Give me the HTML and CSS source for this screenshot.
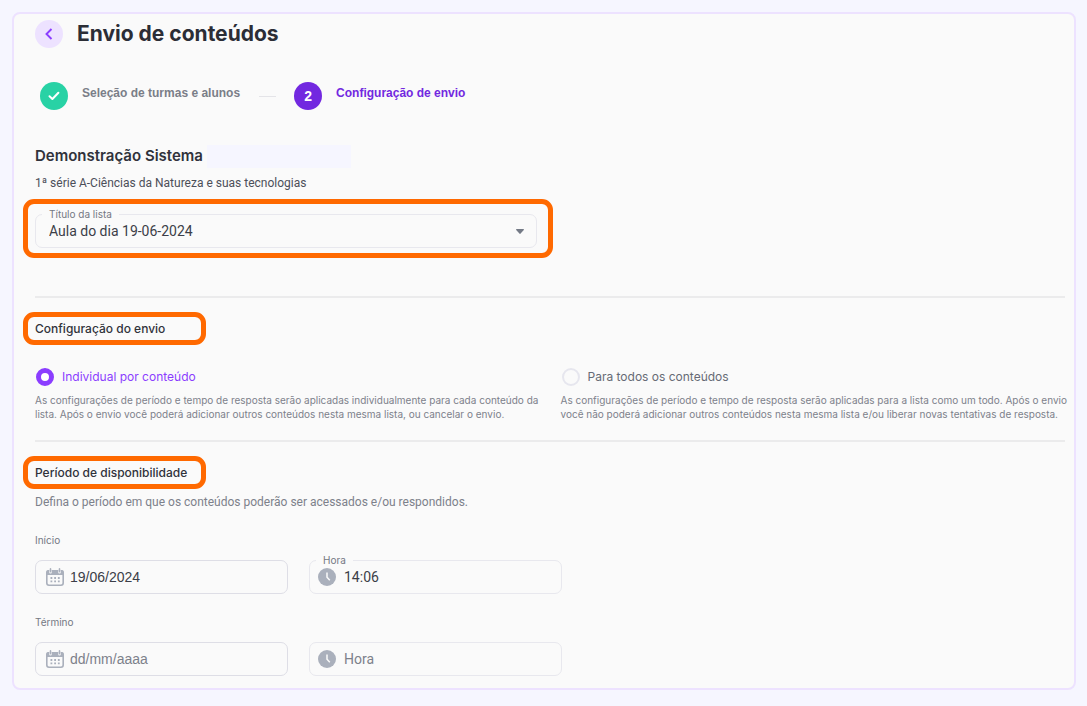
FILE: index.html
```
<!DOCTYPE html>
<html lang="pt-BR">

<head>
    <meta charset="UTF-8">
    <meta name="viewport" content="width=device-width, initial-scale=1.0">
    <title>Envio de conteúdos</title>
    <link rel="stylesheet" href="styles.css">
</head>

<body>
    <main class="card">
        <header class="header">
            <button type="button" class="back" aria-label="Voltar">
                <svg width="8" height="12" viewBox="0 0 8 12"><path d="M6.5 1 1.5 6l5 5" fill="none" stroke="#8b3dff" stroke-width="1.9" /></svg>
            </button>
            <h1>Envio de conteúdos</h1>
        </header>

        <ol class="steps">
            <li class="step done">
                <span class="circle">
                    <svg width="12" height="10" viewBox="0 0 12 10"><path d="M1.5 5.3 4.4 8l6-6.3" fill="none" stroke="#fff" stroke-width="2" stroke-linecap="round" stroke-linejoin="round" /></svg>
                </span>
                <span class="step-label">Seleção de turmas e alunos</span>
            </li>
            <li class="step current">
                <span class="circle">2</span>
                <span class="step-label">Configuração de envio</span>
            </li>
        </ol>

        <div class="school">
            <h2>Demonstração Sistema</h2>
            <span class="school-name"></span>
        </div>
        <p class="class-name">1ª série A-Ciências da Natureza e suas tecnologias</p>

        <div class="mark mark-field">
            <div class="field">
                <label class="float" for="lista">Título da lista</label>
                <select id="lista">
                    <option>Aula do dia 19-06-2024</option>
                </select>
                <svg class="arrow" width="8" height="5" viewBox="0 0 8 5"><path d="M.6 0h6.8q.8.2.4.9L4.6 4.6q-.6.6-1.2 0L.2.9Q-.2.2.6 0z" fill="#747a86" /></svg>
            </div>
        </div>

        <section class="config">
            <h3 class="mark">Configuração do envio</h3>
            <div class="options">
                <div class="option">
                    <label><input type="radio" name="envio" checked aria-describedby="desc1"> Individual por conteúdo</label>
                    <p id="desc1">As configurações de período e tempo de resposta serão aplicadas individualmente para cada conteúdo da lista. Após o envio você poderá adicionar outros conteúdos nesta mesma lista, ou cancelar o envio.</p>
                </div>
                <div class="option">
                    <label><input type="radio" name="envio" aria-describedby="desc2"> Para todos os conteúdos</label>
                    <p id="desc2">As configurações de período e tempo de resposta serão aplicadas para a lista como um todo. Após o envio você não poderá adicionar outros conteúdos nesta mesma lista e/ou liberar novas tentativas de resposta.</p>
                </div>
            </div>
        </section>

        <section class="period">
            <h3 class="mark">Período de disponibilidade</h3>
            <p class="period-text">Defina o período em que os conteúdos poderão ser acessados e/ou respondidos.</p>

            <label class="row-label" for="inicio">Início</label>
            <div class="row">
                <div class="field date">
                    <svg class="icon" width="18" height="18" viewBox="0 0 18 18"><use href="#calendar" /></svg>
                    <input type="text" id="inicio" value="19/06/2024">
                </div>
                <div class="field time">
                    <label class="float" for="hora1">Hora</label>
                    <svg class="icon" width="18" height="18" viewBox="0 0 18 18"><use href="#clock" /></svg>
                    <input type="text" id="hora1" value="14:06">
                </div>
            </div>

            <label class="row-label" for="termino">Término</label>
            <div class="row">
                <div class="field date">
                    <svg class="icon" width="18" height="18" viewBox="0 0 18 18"><use href="#calendar" /></svg>
                    <input type="text" id="termino" placeholder="dd/mm/aaaa">
                </div>
                <div class="field time">
                    <svg class="icon" width="18" height="18" viewBox="0 0 18 18"><use href="#clock" /></svg>
                    <input type="text" aria-label="Hora de término" placeholder="Hora">
                </div>
            </div>
        </section>
    </main>

    <svg class="symbols" width="0" height="0">
        <symbol id="calendar" viewBox="0 0 18 18">
            <rect x=".8" y="2.8" width="16.4" height="14.4" rx="2.2" fill="none" stroke="#aab0bc" stroke-width="1.6" />
            <path d="M.2 7V4.3q0-2.3 2.3-2.3h13q2.3 0 2.3 2.3V7z" fill="#aab0bc" />
            <path d="M4.5 3v1.2M13.5 3v1.2" stroke="#fafafa" stroke-width="2.6" stroke-linecap="round" />
            <path d="M4.5.9v2.9M13.5.9v2.9" stroke="#aab0bc" stroke-width="1.6" stroke-linecap="round" />
            <path d="M4.5 10h9.6M4.5 13.4h9.6" stroke="#aab0bc" stroke-width="1.8" stroke-dasharray="1.8 1.9" />
        </symbol>
        <symbol id="clock" viewBox="0 0 18 18">
            <circle cx="9" cy="9" r="9" fill="#aab0bc" />
            <path d="M9 4.5v4.8l2.8 2.9" fill="none" stroke="#fafafa" stroke-width="1.5" />
        </symbol>
    </svg>
</body>

</html>
```
FILE: styles.css
```
* {
    box-sizing: border-box;
}

body {
    margin: 0;
    padding: 12px 11px 16px 12px;
    background: #f6f6ff;
    color: #30323b;
    font-family: Inter, "Liberation Sans", sans-serif;
}

h1,
h2,
h3,
p,
ol {
    margin: 0;
    padding: 0;
}

input,
select {
    font-family: inherit;
}

.card {
    padding: 6px 9px 12px 21px;
    border: 2px solid #ede2ff;
    border-radius: 8px;
    background: #fafafa;
}

.header {
    display: flex;
    align-items: center;
    gap: 14px;
}

.back {
    display: flex;
    align-items: center;
    justify-content: center;
    width: 28px;
    height: 28px;
    padding: 0;
    border: 0;
    border-radius: 50%;
    background: #ede2ff;
}

h1 {
    font-size: 21px;
    line-height: 28px;
    font-weight: 700;
    color: #2b2d36;
}

/* steps */
.steps {
    display: flex;
    margin: 34px 0 0 5px;
    list-style: none;
}

.step {
    display: flex;
    gap: 14px;
    font-family: "Liberation Sans", Arial, sans-serif;
    font-size: 12px;
    font-weight: 700;
}

.circle {
    display: flex;
    align-items: center;
    justify-content: center;
    width: 28px;
    height: 28px;
    border-radius: 50%;
    color: #fff;
    font-size: 14px;
}

.step-label {
    line-height: 22px;
}

.done .circle {
    background: #28d2a5;
}

.done .step-label {
    color: #7a7e88;
}

.done::after {
    content: "";
    align-self: center;
    width: 17px;
    height: 1px;
    margin: 0 18px 0 5px;
    background: #e4e4e8;
}

.current .circle {
    background: #7228e0;
}

.current .step-label {
    color: #7228e0;
}

.school {
    display: flex;
    align-items: center;
    gap: 4px;
    margin-top: 34px;
}

h2 {
    font-size: 15px;
    line-height: 24px;
    font-weight: 600;
}

.school-name {
    width: 144px;
    height: 23px;
    background: #f6f6ff;
}

.class-name,
.period-text {
    font-family: Roboto, "Liberation Sans", sans-serif;
    font-size: 12px;
    line-height: 18px;
}

.class-name {
    margin-top: 6px;
    color: #4c4f59;
}

/* orange highlight */
.mark {
    width: 183px;
    margin-left: -12px;
    padding: 0 7px;
    border: 5px solid #ff6900;
    border-radius: 11px;
}

h3.mark {
    font-size: 12px;
    line-height: 23px;
    font-weight: 500;
}

.mark-field {
    width: 530px;
    max-width: 100%;
    margin-top: 7px;
    padding: 10px 11px 5px 7px;
}

.field {
    position: relative;
    display: flex;
    align-items: center;
    height: 34px;
    border: 1px solid #e8e8ee;
    border-radius: 7px;
}

.float {
    position: absolute;
    top: -8px;
    left: 6px;
    padding: 0 7px;
    background: #fafafa;
    font-size: 10px;
    line-height: 14px;
    color: #747883;
}

.field select,
.field input {
    flex: 1;
    min-width: 0;
    height: 100%;
    padding: 0;
    border: 0;
    outline: 0;
    background: none;
    color: #3c3e48;
    font-family: Roboto, "Liberation Sans", sans-serif;
    font-size: 14px;
}

.field select {
    padding-left: 13px;
    appearance: none;
}

.arrow {
    position: absolute;
    right: 12px;
    pointer-events: none;
}

.config {
    margin-top: 38px;
    padding-top: 14px;
    border-top: 2px solid #ebebec;
}

.options {
    display: grid;
    grid-template-columns: 1fr 1fr;
    gap: 21px;
    margin-top: 22px;
}

.option label {
    display: flex;
    align-items: center;
    gap: 8px;
    font-size: 12px;
    line-height: 20px;
    color: #666a75;
}

.option label:has(:checked) {
    color: #8b3dff;
}

.option input {
    appearance: none;
    width: 18px;
    height: 18px;
    margin: 0 0 0 1px;
    border: 2px solid #e6e6ee;
    border-radius: 50%;
}

.option input:checked {
    border: 5px solid #8b3dff;
    background: #fff;
}

.option p {
    margin: 6px -5px 0 0;
    font-size: 10px;
    line-height: 14px;
    color: #7d818b;
}

.period {
    margin-top: 19px;
    padding-top: 14px;
    border-top: 2px solid #ebebec;
}

.period-text {
    margin: 4px 0 22px;
    color: #7d818b;
}

.row-label {
    display: block;
    margin: 21px 0 13px;
    font-size: 10px;
    line-height: 14px;
    color: #747883;
}

.row {
    display: grid;
    grid-template-columns: 1fr 1fr;
    gap: 21px;
    max-width: 527px;
}

.row .field {
    gap: 8px;
    padding-left: 8px;
}

.row .date {
    gap: 6px;
    padding-left: 10px;
    border: 1px solid #dedee6;
}

.row .date input {
    font-family: "Liberation Sans", Arial, sans-serif;
}

.row input::placeholder {
    color: #7d818b;
}

.symbols {
    position: absolute;
}
```
